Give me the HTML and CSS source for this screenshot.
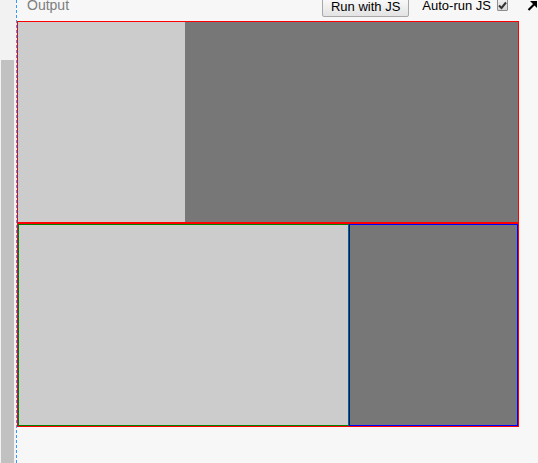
FILE: index.html
```html
<!DOCTYPE html>
<html>
<head>
<meta charset="utf-8">
<link rel="stylesheet" href="styles.css">
</head>
<body>
<div class="gutter"><div class="scrollbar"></div></div>
<div class="main">
  <div class="header">
    <span class="title">Output</span>
    <button class="run">Run with JS</button>
    <span class="auto">Auto-run JS</span>
    <span class="check"><svg width="9" height="9" viewBox="0 0 9 9"><path d="M1 4.5 L3.5 7 L8 1.5" fill="none" stroke="#333" stroke-width="2"/></svg></span>
    <span class="pop"><svg width="11" height="11" viewBox="0 0 11 11"><path d="M1.5 10 L9 2.5" stroke="#000" stroke-width="2.2"/><path d="M3 1 H10 V8 Z" fill="#000"/></svg></span>
  </div>
  <div class="box top">
    <div class="light one-third"></div>
    <div class="dark fill"></div>
  </div>
  <div class="box bottom">
    <div class="light green"></div>
    <div class="dark blue"></div>
  </div>
</div>
</body>
</html>
```
FILE: styles.css
```css
html, body {
  margin: 0;
  padding: 0;
}
body {
  background: #f7f7f7;
  display: flex;
  height: 463px;
  overflow: hidden;
  font-family: "Liberation Sans", Arial, sans-serif;
  font-size: 13px;
}
.gutter {
  width: 16px;
  background: #f2f2f2;
  display: flex;
  flex-direction: column;
}
.scrollbar {
  margin: 60px 2px 0 1px;
  flex: 1;
  background: #c1c1c1;
}
.main {
  border-left: 1px dashed #3399ff;
  flex: 1;
  display: flex;
  flex-direction: column;
}
.header {
  height: 21px;
  display: flex;
  align-items: flex-start;
}
.title {
  color: #7d7d7d;
  font-size: 14px;
  line-height: 16px;
  margin: -3px 0 0 10px;
}
.run {
  margin: -3px 0 0 auto;
  height: 20px;
  padding: 1px 8px;
  border: 1px solid #a8a8a8;
  border-radius: 2px;
  background: linear-gradient(#fbfbfb, #e3e3e3);
  font-family: "Liberation Sans", Arial, sans-serif;
  font-size: 13px;
  line-height: 16px;
  color: #000;
}
.auto {
  margin: -2px 0 0 13px;
  line-height: 16px;
  color: #000;
}
.check {
  margin: -1px 0 0 6px;
  width: 9px;
  height: 10px;
  border: 1px solid #8e8e8e;
  border-radius: 1px;
  background: linear-gradient(#f0f0f0, #d6d6d6);
  display: flex;
  align-items: center;
  justify-content: center;
}
.pop {
  margin: 0 0 0 19px;
  width: 11px;
  height: 11px;
  display: flex;
}
.box {
  width: 500px;
  border: 1px solid #ff0000;
  display: flex;
}
.top {
  height: 200px;
}
.light {
  background: #cccccc;
}
.dark {
  background: #777777;
}
.one-third {
  width: 167px;
}
.fill {
  flex: 1;
}
.green {
  width: 329px;
  height: 200px;
  border: 1px solid #008000;
}
.blue {
  flex: 1;
  height: 200px;
  border: 1px solid #0000ff;
}
```
